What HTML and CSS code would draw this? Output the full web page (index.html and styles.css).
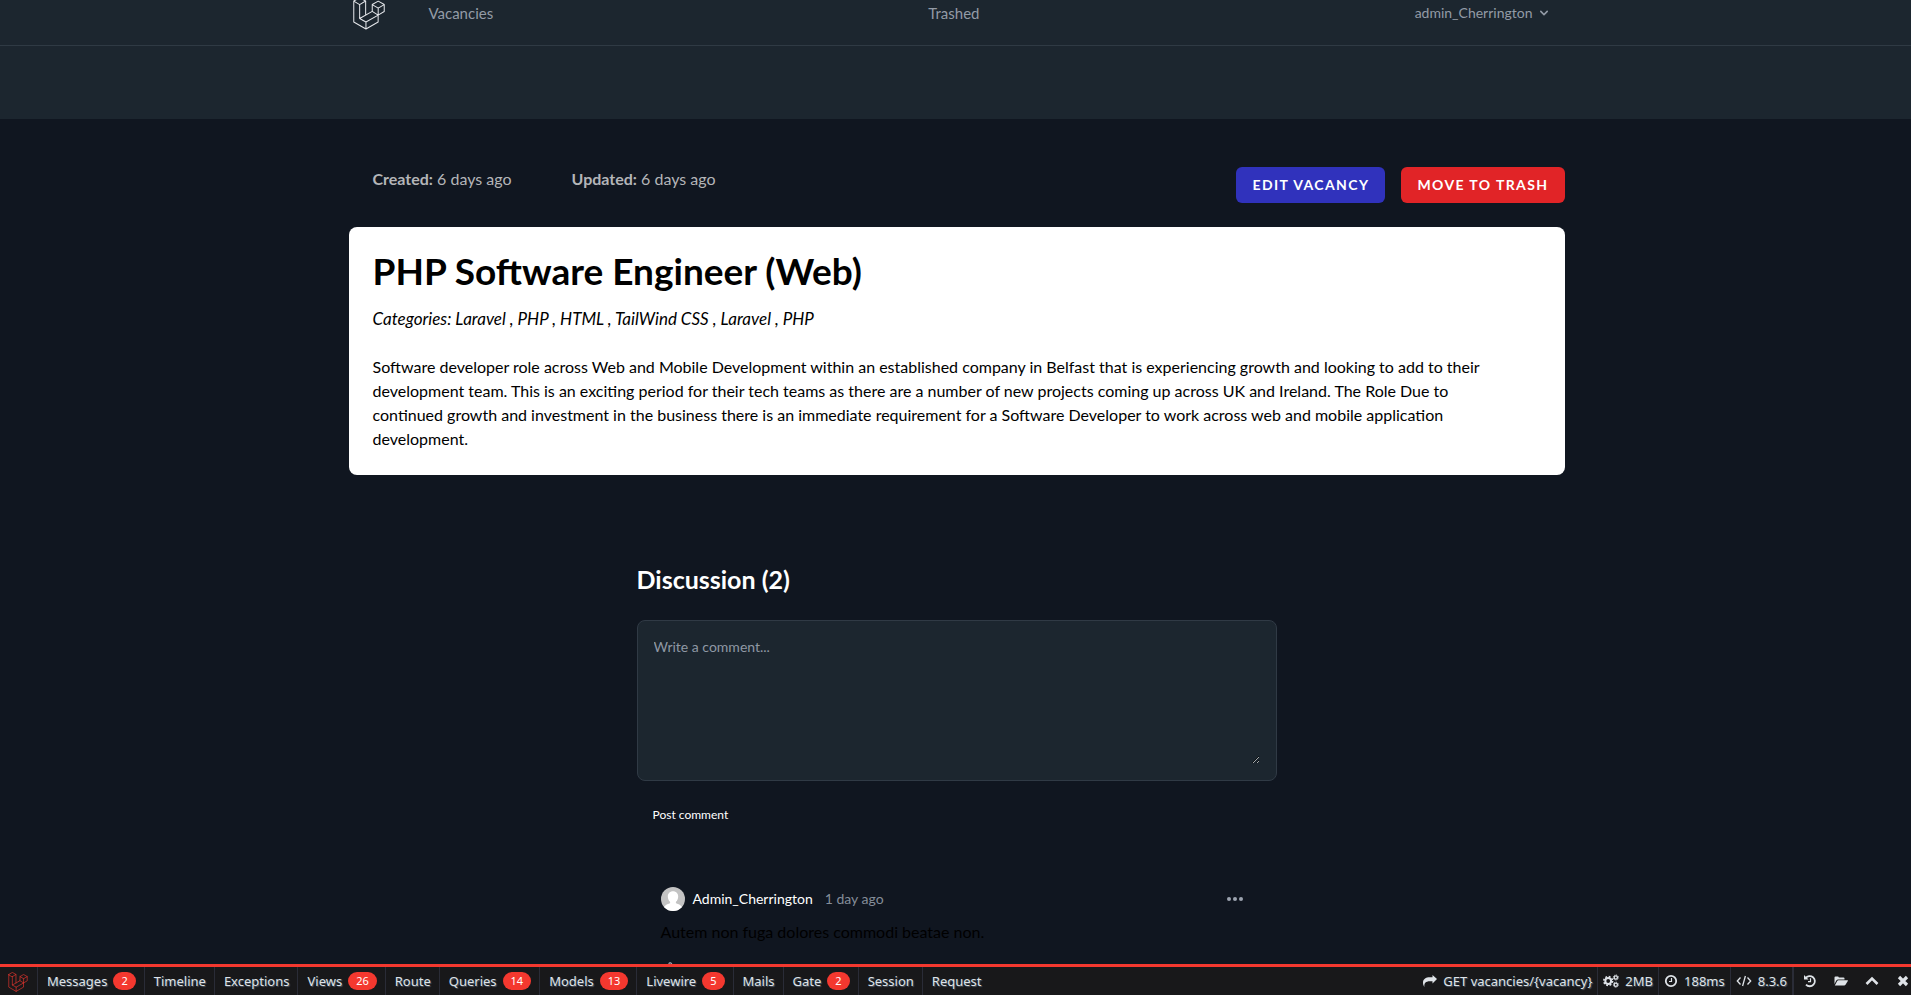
FILE: index.html
```
<!DOCTYPE html>
<html lang="en">
<head>
<meta charset="utf-8">
<title>PHP Software Engineer (Web)</title>
<link rel="stylesheet" href="styles.css">
</head>
<body>
<svg class="defs" aria-hidden="true">
  <symbol id="laravel" viewBox="0 0 62 65">
    <g fill="none" stroke="currentColor" stroke-width="2" stroke-linejoin="round" stroke-linecap="round">
      <path d="M1 8 12.6 1.4 24.4 8 12.6 15zM1 8v41.2L25 63l24-13.8V35.6l12-7V14.9L49.2 8.2 37.4 14.9v13.3L12.6 42.4V15M24.4 8v27.6M37.4 14.9l11.7 6.9L61 14.9M49.1 21.8v13.8L25 49.3l-12.4-6.9M37.4 28.2 49 35.6M25 49.3V63"/>
    </g>
  </symbol>
</svg>

<div class="page">
  <nav class="nav">
    <div class="container nav-row">
      <a class="brand" href="#" aria-label="Home"><svg class="brand-logo"><use href="#laravel"/></svg></a>
      <div class="nav-links">
        <a href="#">Vacancies</a>
        <a href="#">Trashed</a>
        <button class="user-menu" type="button">admin_Cherrington
          <svg class="chevron" viewBox="0 0 20 20" fill="currentColor" aria-hidden="true"><path fill-rule="evenodd" d="M5.293 7.293a1 1 0 011.414 0L10 10.586l3.293-3.293a1 1 0 111.414 1.414l-4 4a1 1 0 01-1.414 0l-4-4a1 1 0 010-1.414z"/></svg>
        </button>
      </div>
    </div>
  </nav>
  <header class="page-header"></header>

  <main class="main">
    <section class="container">
      <div class="toolbar">
        <div class="dates">
          <p><strong>Created:</strong> 6 days ago</p>
          <p><strong>Updated:</strong> 6 days ago</p>
        </div>
        <div class="actions">
          <button class="btn btn-edit" type="button">Edit Vacancy</button>
          <button class="btn btn-trash" type="button">Move to trash</button>
        </div>
      </div>
      <article class="card">
        <h1>PHP Software Engineer (Web)</h1>
        <p class="categories">Categories: Laravel , PHP , HTML , TailWind CSS , Laravel , PHP</p>
        <p class="description">Software developer role across Web and Mobile Development within an established company in Belfast that is experiencing growth and looking to add to their development team. This is an exciting period for their tech teams as there are a number of new projects coming up across UK and Ireland. The Role Due to continued growth and investment in the business there is an immediate requirement for a Software Developer to work across web and mobile application development.</p>
      </article>
    </section>

    <section class="discussion">
      <h2>Discussion (2)</h2>
      <form class="comment-form">
        <div class="comment-box">
          <textarea rows="6" placeholder="Write a comment..." aria-label="Your comment"></textarea>
        </div>
        <button class="post" type="submit">Post comment</button>
      </form>
      <article class="comment">
        <header class="comment-head">
          <svg class="avatar" viewBox="0 0 24 24" aria-hidden="true">
            <clipPath id="round"><circle cx="12" cy="12" r="12"/></clipPath>
            <g clip-path="url(#round)"><path fill="#c3c3c3" d="M0 0h24v24H0z"/><path fill="#fff" d="M12 4.200c3 0 5.200 2.200 5.200 5.200 0 2.200-.9 4.300-2.300 5.400v1.500c2.400.9 5.600 1.700 6.300 4.700V24H2.800v-3c.7-3 3.900-3.800 6.300-4.700v-1.500c-1.400-1.100-2.300-3.200-2.300-5.400 0-3 2.200-5.200 5.200-5.200z"/></g>
          </svg>
          <span class="author">Admin_Cherrington</span>
          <time>1 day ago</time>
          <button class="more" type="button" aria-label="Comment settings">
            <svg viewBox="0 0 16 4" fill="currentColor"><circle cx="2" cy="2" r="2"/><circle cx="8" cy="2" r="2"/><circle cx="14" cy="2" r="2"/></svg>
          </button>
        </header>
        <p class="comment-text">Autem non fuga dolores commodi beatae non.</p>
        <button class="like" type="button" aria-label="Like">
          <svg viewBox="0 0 20 20" fill="none" stroke="currentColor" stroke-width="1.500" stroke-linejoin="round"><path d="M1.500 9h3v9h-3zM4.500 9.500c3-1 4.500-3.500 5.500-7.500.5-1.800 3.800-1.200 3.500 2L13 8h4.500c1.500 0 2 1.500 1.500 3l-1.500 5.500c-.3 1-1 1.500-2 1.500H9l-4.500-1.500"/></svg>
        </button>
      </article>
    </section>
  </main>
</div>

<footer class="debugbar">
  <a class="debug-logo" href="#" aria-label="Debugbar"><svg><use href="#laravel"/></svg></a>
  <div class="tabs">
    <a href="#">Messages<span class="badge">2</span></a>
    <a href="#">Timeline</a>
    <a href="#">Exceptions</a>
    <a href="#">Views<span class="badge">26</span></a>
    <a href="#">Route</a>
    <a href="#">Queries<span class="badge">14</span></a>
    <a href="#">Models<span class="badge">13</span></a>
    <a href="#">Livewire<span class="badge">5</span></a>
    <a href="#">Mails</a>
    <a href="#">Gate<span class="badge">2</span></a>
    <a href="#">Session</a>
    <a href="#">Request</a>
  </div>
  <div class="indicators">
    <span><svg viewBox="0 0 14 14" fill="currentColor"><path d="M14 5 9.500 1v2.300H7C2.500 3.300 0 5.200 0 8.800c0 1.600.6 3 1.400 4.200-.4-3.600 1-5.700 5.600-5.700h2.500V9.500z"/></svg>GET vacancies/{vacancy}</span>
    <span><svg class="wide" viewBox="0 0 16 14"><g fill="none" stroke="currentColor"><circle cx="5.200" cy="7" r="2.900" stroke-width="2"/><circle cx="5.200" cy="7" r="4.400" stroke-width="1.600" stroke-dasharray="1.800 1.655"/><circle cx="12.800" cy="3.500" r="1.600" stroke-width="1.300"/><circle cx="12.800" cy="3.500" r="2.500" stroke-dasharray="1.100 .86"/><circle cx="12.800" cy="10.700" r="1.600" stroke-width="1.300"/><circle cx="12.800" cy="10.700" r="2.500" stroke-dasharray="1.100 .86"/></g></svg>2MB</span>
    <span><svg viewBox="0 0 14 14" fill="none" stroke="currentColor"><circle cx="7" cy="7" r="5.200" stroke-width="1.800"/><path d="M7.500 4v3.500H5" stroke-width="1.200"/></svg>188ms</span>
    <span><svg class="wide" viewBox="0 0 16 14" fill="none" stroke="currentColor" stroke-width="1.300"><path d="M4.500 3.500 1.300 7l3.200 3.500M11.500 3.500 14.700 7l-3.200 3.500M9.400 2 6.600 12"/></svg>8.3.6</span>
  </div>
  <div class="controls">
    <button type="button" aria-label="History"><svg viewBox="0 0 14 14" fill="none" stroke="currentColor" stroke-width="1.800"><path d="M2.600 4.200A5.100 5.100 0 1 1 3 10.600"/><path d="M1 1v4.600h4.600z" fill="currentColor" stroke="none"/><path d="M7.500 4.200v3.500H5" stroke-width="1.200"/></svg></button>
    <button type="button" aria-label="Open"><svg viewBox="0 0 14 14" fill="currentColor"><path d="M.5 10V3.500q0-1 1-1h2.300q1 0 1 1h4.700q1 0 1 1v1H4.200Q3 5.500 2.300 6.500z"/><path d="M.8 11.500 3.200 7q.5-.7 1.300-.7h9q.7 0 .3.700l-2.300 3.800q-.5.7-1.300.700z"/></svg></button>
    <button type="button" aria-label="Minimize"><svg viewBox="0 0 14 14" fill="none" stroke="currentColor" stroke-width="2.600"><path d="M1.500 10 7 4.500l5.500 5.500"/></svg></button>
    <button type="button" aria-label="Close"><svg viewBox="0 0 14 14" fill="none" stroke="currentColor" stroke-width="3.200"><path d="m3 3 8 8M11 3l-8 8"/></svg></button>
  </div>
</footer>
</body>
</html>
```
FILE: styles.css
```
* { box-sizing: border-box; }
body {
  margin: 0;
  min-height: 100vh;
  background: #101620;
  color: #000;
  font: 16px/24px Lato, sans-serif;
}
h1, h2, p { margin: 0; }
a { color: inherit; text-decoration: none; }
button { border: 0; padding: 0; background: none; color: inherit; font: inherit; }
svg { display: block; flex: none; }
.defs { position: absolute; width: 0; height: 0; }

/* the page is scrolled a little below its top */
.page { margin-top: -19px; }
.container { max-width: 1280px; margin: 0 auto; padding: 0 31px 0 33px; }

.nav { background: #1c262f; border-bottom: 1px solid #2f3a44; color: #939ba6; font-size: 15px; line-height: 20px; }
.nav-row { display: flex; align-items: center; gap: 44px; height: 64px; }
.brand { padding-left: 4px; color: #e5e7eb; }
.brand-logo { width: 32px; height: 33px; }
.nav-links { flex: 1; display: flex; justify-content: space-between; align-items: center; padding-right: 12px; }
.user-menu { display: flex; align-items: center; gap: 4px; font-size: 14px; }
.chevron { width: 16px; height: 16px; }
.page-header { height: 73px; background: #1c262f; }

.main { padding-top: 48px; }
.toolbar { display: flex; justify-content: space-between; align-items: flex-start; padding-left: 24px; margin-bottom: 24px; }
.dates { display: flex; gap: 60px; color: #b4b5b8; }
.dates strong { font-weight: 700; }
.actions { display: flex; gap: 16px; }
.btn { height: 36px; padding: 0 16px; border-radius: 6px; color: #fff; font-size: 14px; line-height: 20px; font-weight: 700; letter-spacing: 0.1em; text-transform: uppercase; }
.btn-edit { background: #3032bc; }
.btn-trash { background: #e12427; }

.card { padding: 24px; border-radius: 8px; background: #fff; }
.card h1 { margin-bottom: 16px; font-size: 37px; line-height: 40px; font-weight: 700; }
.categories { margin-bottom: 24px; font-size: 17px; font-style: italic; }
.description { max-width: 1140px; }

.discussion { max-width: 672px; margin: 0 auto; padding: 88px 15px 0 17px; }
.discussion h2 { margin-bottom: 25px; color: #fff; font-size: 25px; line-height: 32px; font-weight: 700; }
.comment-box { padding: 16px; border: 1px solid #303a45; border-radius: 8px; background: #1c262f; }
.comment-box textarea { display: block; width: 100%; height: 127px; padding: 0; border: 0; outline: 0; resize: vertical; background: transparent; color: #fff; font: 14px/20px Lato, sans-serif; }
.comment-box textarea::placeholder { color: #8f98a4; }
.post { margin-top: 16px; padding: 10px 16px; color: #fff; font-size: 12px; line-height: 16px; }
.comment { margin-top: 38px; padding: 16px 24px 0; }
.comment-head { display: flex; align-items: center; margin-bottom: 9px; font-size: 14px; line-height: 20px; }
.avatar { width: 24px; height: 24px; margin-right: 8px; }
.author { margin-right: 12px; color: #fff; }
.comment-head time { color: #858d99; }
.more { margin-left: auto; padding: 10px; color: #9ca3af; }
.more svg { width: 16px; height: 4px; }
.like { display: block; margin-top: 18px; color: #9ca3af; }
.like svg { width: 16px; height: 16px; }

.debugbar {
  position: fixed; left: 0; right: 0; bottom: 0;
  display: flex; height: 31px; border-top: 3px solid #f4382f;
  background: #18181a; color: #dfe3e8;
  font: 13px/28px "Noto Sans", sans-serif;
  text-shadow: 1px 1px 1px #4b5563;
  white-space: nowrap; overflow: hidden;
}
.debug-logo { padding: 5px 9px 0 8px; color: #f4382f; }
.debug-logo svg { width: 20px; height: 20px; }
.tabs { display: flex; flex: 1; }
.tabs a { display: flex; align-items: center; padding: 0 8px 0 9px; border-left: 1px solid #2a2c37; }
.badge { margin-left: 6px; padding: 0 8px; border-radius: 9px; background: #f4382f; color: #fff; font-size: 11px; line-height: 18px; text-shadow: none; }
.indicators { display: flex; }
.indicators span { display: flex; align-items: center; gap: 6px; padding: 0 5px; border-right: 1px solid #2a2c37; }
.indicators svg { width: 14px; height: 14px; }
.indicators .wide { width: 16px; }
.controls { display: flex; align-items: center; gap: 17px; margin-right: 1px; padding-left: 9px; border-left: 1px solid #2a2c37; }
.controls svg { width: 14px; height: 14px; }
```
